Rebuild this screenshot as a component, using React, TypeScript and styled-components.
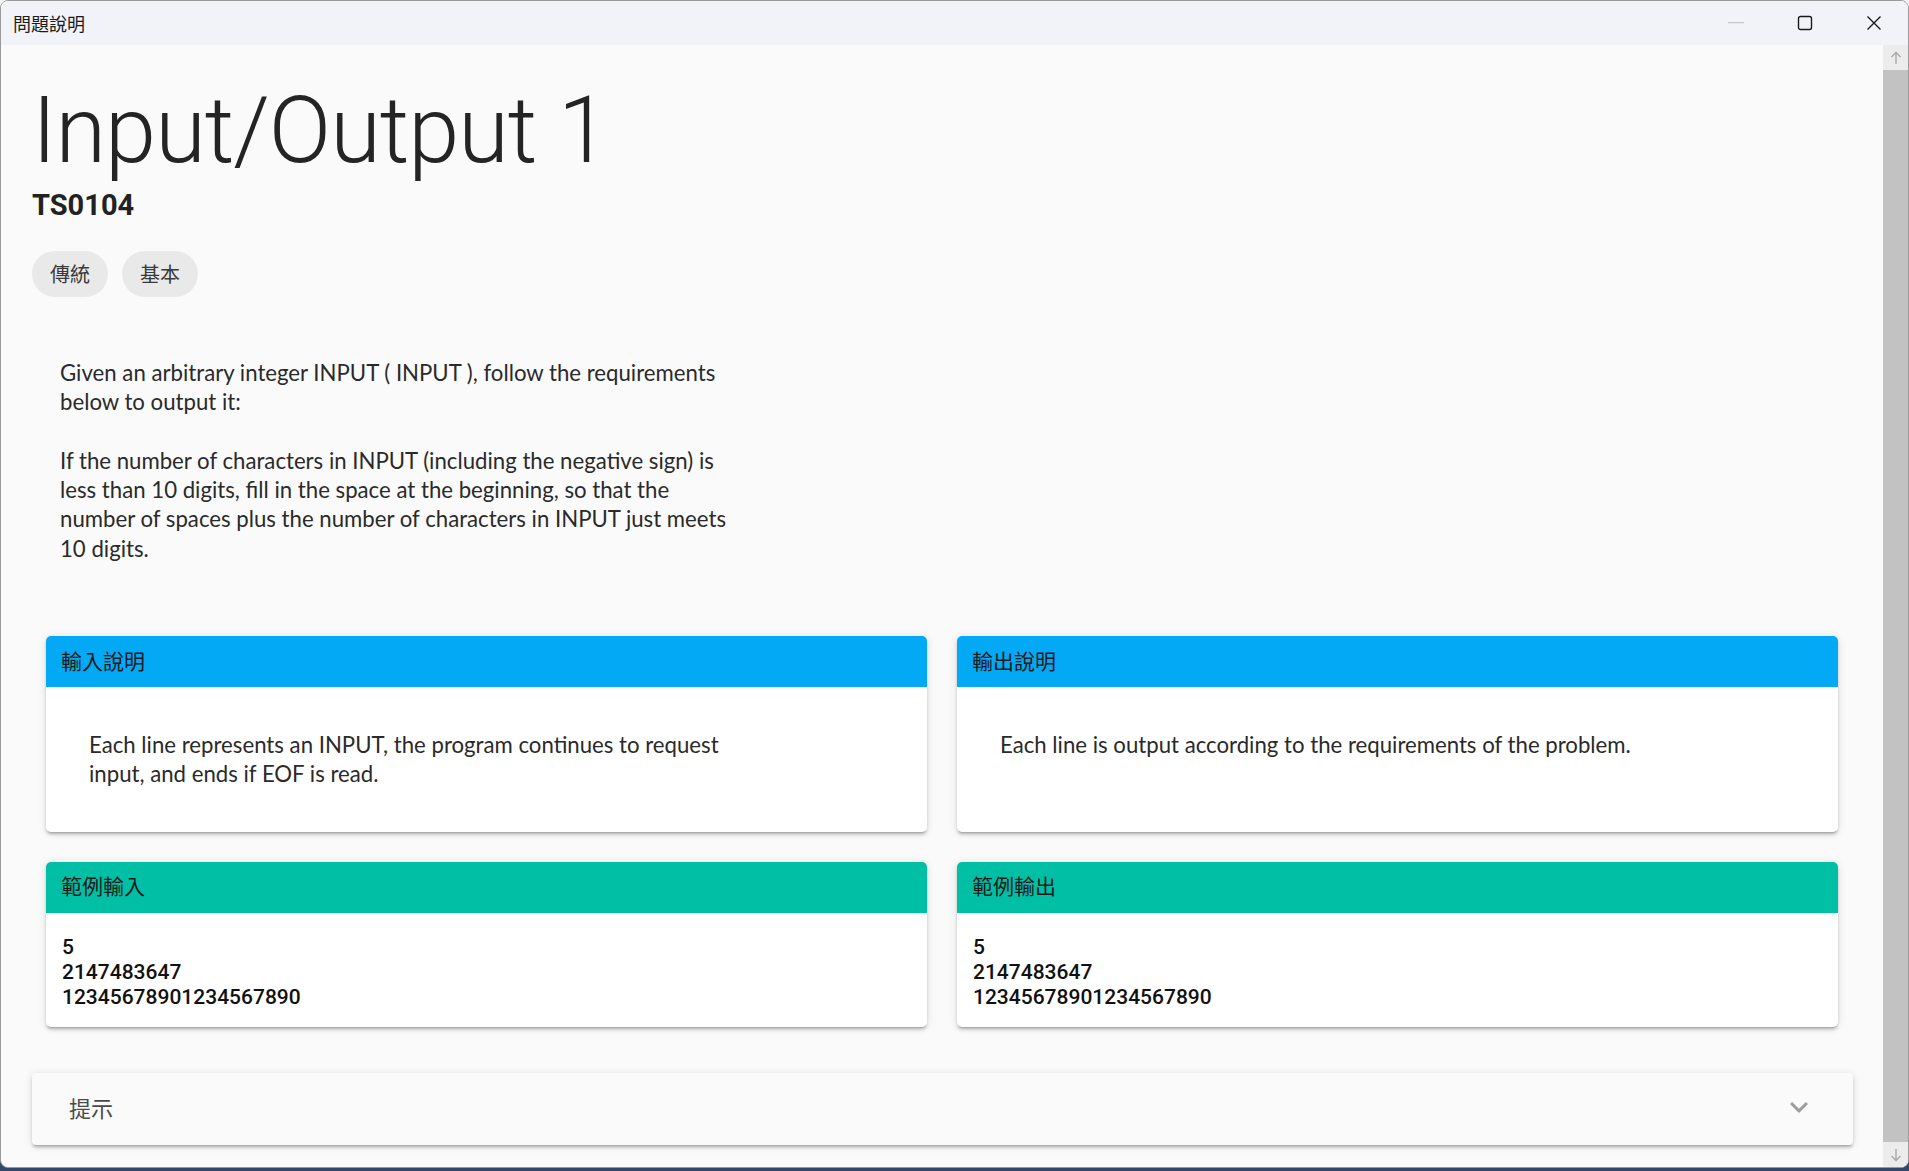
import React from 'react'
import styled, { createGlobalStyle } from 'styled-components'

const CJK = '"Noto Sans CJK TC"'
const GlobalStyle = createGlobalStyle`
  html, body {
    margin: 0;
    padding: 0;
    background: #ffffff;
  }
  body {
    font-family: Roboto, ${CJK}, sans-serif;
  }
  * {
    box-sizing: border-box;
  }
`

const Desktop = styled.div`
  width: 1909px;
  height: 1171px;
  background: linear-gradient(#f4f4f4 0, #f4f4f4 1150px, #34466a 1150px);
`
const Window = styled.div`
  height: 1168px;
  display: flex;
  flex-direction: column;
  border: 1px solid #9a9a9a;
  border-radius: 8px;
  overflow: hidden;
  background: #fafafa;
`
const TitleBar = styled.div`
  height: 44px;
  flex: none;
  display: flex;
  align-items: center;
  background: #f2f3f8;
  padding-left: 12px;
  font-family: ${CJK}, sans-serif;
  font-size: 18px;
  color: #1b1b1b;
`
const Controls = styled.div`
  margin-left: auto;
  display: flex;
  height: 100%;
`
const ControlButton = styled.div`
  width: 69px;
  height: 100%;
  display: flex;
  align-items: center;
  justify-content: center;
`
const Body = styled.div`
  flex: 1;
  display: flex;
  min-height: 0;
`
const Content = styled.main`
  flex: 1;
  overflow: hidden;
  padding: 30px 30px 0 31px;
`
const Scrollbar = styled.div`
  width: 25px;
  flex: none;
  display: flex;
  flex-direction: column;
  background: #f0f0f0;
`
const ScrollArrow = styled.div`
  height: 25px;
  flex: none;
  display: flex;
  align-items: center;
  justify-content: center;
  background: #ececec;
`
const ScrollThumb = styled.div`
  flex: 1;
  background: #c2c2c2;
`

const Title = styled.h1`
  margin: 0;
  font-family: Roboto, sans-serif;
  font-weight: 300;
  font-size: 92px;
  letter-spacing: -1px;
  line-height: 112px;
  color: #242424;
`
const Code = styled.h2`
  margin: 0;
  font-family: Roboto, sans-serif;
  font-weight: 700;
  font-size: 29px;
  line-height: 36px;
  color: #222;
`
const Chips = styled.div`
  display: flex;
  gap: 14px;
  margin-top: 28px;
`
const Chip = styled.span`
  height: 46px;
  padding: 0 18px 2px;
  display: inline-flex;
  align-items: center;
  border-radius: 23px;
  background: #e9e9e9;
  font-family: Roboto, ${CJK}, sans-serif;
  font-size: 20px;
  color: #3a3a3a;
`
const Description = styled.div`
  margin-top: 61px;
  padding-left: 28px;
  width: 716px;
  font-family: Lato, 'Open Sans', sans-serif;
  font-size: 22.2px;
  line-height: 29.3px;
  color: #2a2a2a;

  p {
    margin: 0;
  }
  p + p {
    margin-top: 29.3px;
  }
`
const CardGrid = styled.div`
  display: grid;
  grid-template-columns: 1fr 1fr;
  gap: 30px;
  padding: 0 15px 0 14px;
  margin-top: 73px;
`
const Card = styled.section`
  background: #fff;
  border-radius: 5px;
  overflow: hidden;
  box-shadow: 0 3px 2px -2px rgba(0, 0, 0, 0.2), 0 3px 3px 0 rgba(0, 0, 0, 0.14),
    0 1px 8px 0 rgba(0, 0, 0, 0.12);
`
const CardHeader = styled.header<{ $tone: 'info' | 'sample' }>`
  height: 51px;
  display: flex;
  align-items: center;
  padding: 0 0 4px 15px;
  background: ${({ $tone }) => ($tone === 'info' ? '#03a9f4' : '#00bfa5')};
  font-family: ${CJK}, sans-serif;
  font-size: 21px;
  color: #1a1a1a;
`
const CardText = styled.div`
  padding: 43px 43px;
  width: 746px;
  font-family: Lato, 'Open Sans', sans-serif;
  font-size: 22.2px;
  line-height: 29.3px;
  color: #2a2a2a;
`
const SampleText = styled.pre`
  margin: 0;
  padding: 22px 16px 17px;
  font-family: Roboto, sans-serif;
  font-weight: 500;
  font-size: 21px;
  line-height: 25px;
  color: #111;
`
const Accordion = styled.div`
  margin-top: 46px;
  height: 72px;
  display: flex;
  align-items: center;
  padding: 0 36px 3px 37px;
  background: #fafafa;
  border-radius: 4px;
  box-shadow: 0 3px 2px -2px rgba(0, 0, 0, 0.2), 0 3px 3px 0 rgba(0, 0, 0, 0.14),
    0 1px 8px 0 rgba(0, 0, 0, 0.12);
  font-family: ${CJK}, sans-serif;
  font-size: 22px;
  color: #4a4a4a;

  svg {
    margin-left: auto;
  }
`

const ExpandMore = () => (
  <svg width="36" height="36" viewBox="0 0 24 24" fill="#9e9e9e">
    <path d="M16.59 8.59 12 13.17 7.41 8.59 6 10l6 6 6-6z" />
  </svg>
)

const Arrow = ({ down }: { down?: boolean }) => (
  <svg width="12" height="14" viewBox="0 0 12 14" fill="none" stroke="#a6a6a6" strokeWidth="1.3">
    <g transform={down ? 'rotate(180 6 7)' : undefined}>
      <path d="M6 13V1.5M1.5 6 6 1.5 10.5 6" />
    </g>
  </svg>
)

const App = () => (
  <>
    <GlobalStyle />
    <Desktop>
      <Window>
        <TitleBar>
          問題說明
          <Controls>
            <ControlButton>
              <svg width="16" height="2" viewBox="0 0 16 2">
                <rect width="16" height="1.2" fill="#c4c4c4" />
              </svg>
            </ControlButton>
            <ControlButton>
              <svg width="16" height="16" viewBox="0 0 16 16" fill="none" stroke="#1a1a1a" strokeWidth="1.4">
                <rect x="1.5" y="1.5" width="13" height="13" rx="2" />
              </svg>
            </ControlButton>
            <ControlButton>
              <svg width="16" height="16" viewBox="0 0 16 16" fill="none" stroke="#1a1a1a" strokeWidth="1.4">
                <path d="M1.5 1.5l13 13M14.5 1.5l-13 13" />
              </svg>
            </ControlButton>
          </Controls>
        </TitleBar>
        <Body>
          <Content>
            <Title>Input/Output 1</Title>
            <Code>TS0104</Code>
            <Chips>
              <Chip>傳統</Chip>
              <Chip>基本</Chip>
            </Chips>
            <Description>
              <p>Given an arbitrary integer INPUT ( INPUT ), follow the requirements below to output it:</p>
              <p>
                If the number of characters in INPUT (including the negative sign) is less than 10 digits, fill in
                the space at the beginning, so that the number of spaces plus the number of characters in INPUT just
                meets 10 digits.
              </p>
            </Description>
            <CardGrid>
              <Card>
                <CardHeader $tone="info">輸入說明</CardHeader>
                <CardText>
                  Each line represents an INPUT, the program continues to request input, and ends if EOF is read.
                </CardText>
              </Card>
              <Card>
                <CardHeader $tone="info">輸出說明</CardHeader>
                <CardText>Each line is output according to the requirements of the problem.</CardText>
              </Card>
              <Card>
                <CardHeader $tone="sample">範例輸入</CardHeader>
                <SampleText>{'5\n2147483647\n12345678901234567890'}</SampleText>
              </Card>
              <Card>
                <CardHeader $tone="sample">範例輸出</CardHeader>
                <SampleText>{'5\n2147483647\n12345678901234567890'}</SampleText>
              </Card>
            </CardGrid>
            <Accordion>
              提示
              <ExpandMore />
            </Accordion>
          </Content>
          <Scrollbar>
            <ScrollArrow>
              <Arrow />
            </ScrollArrow>
            <ScrollThumb />
            <ScrollArrow>
              <Arrow down />
            </ScrollArrow>
          </Scrollbar>
        </Body>
      </Window>
    </Desktop>
  </>
)

export default App
